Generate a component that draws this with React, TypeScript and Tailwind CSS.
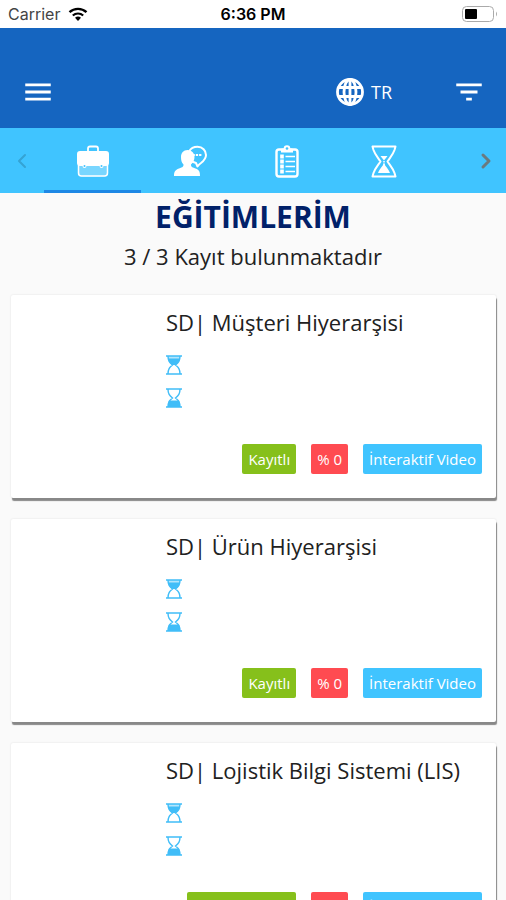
import { useState } from "react";
import { clsx } from "clsx";
import { ChevronLeft, ChevronRight } from "lucide-react";
import { MdFilterList, MdMenu } from "react-icons/md";

const BriefcaseIcon = () => (
  <svg viewBox="0 0 34 34" className="size-[34px]" fill="none" aria-hidden="true">
    <path d="M12 7V4.500q0-2 2-2h6q2 0 2 2V7" stroke="currentColor" strokeWidth="1.800" />
    <path d="M2 18h30v11q0 3.500-3.500 3.500h-23Q2 32.500 2 29Z" fill="currentColor" opacity=".3" />
    <path
      d="M4 7h26q3 0 3 3v9q0 3-3 3h-2.500a2 2 0 0 1-4 0h-13a2 2 0 0 1-4 0H4q-3 0-3-3v-9q0-3 3-3Z"
      fill="currentColor"
    />
    <path d="M2.500 21v8q0 3 3 3h23q3 0 3-3v-8" stroke="currentColor" strokeWidth="1.500" />
    <circle cx="8.500" cy="22" r="1" fill="#40c4ff" />
    <circle cx="25.500" cy="22" r="1" fill="#40c4ff" />
  </svg>
);

const AdvisorIcon = () => (
  <svg viewBox="0 0 34 34" className="size-[34px]" fill="none" aria-hidden="true">
    <path
      d="M1 32c0-4 1-6 5-7.500 4-1.300 4.500-2 4.500-4C8.500 18.500 8 16 8 13 8 9 10.500 6 14.500 6s7 3 7 7c0 3-1.500 5.500-3.500 7.500 0 2 .5 2.700 4.500 4C26.500 26 27 28 27 32Z"
      fill="currentColor"
    />
    <path
      d="M16 7.500C18 4 21 2.800 24.500 2.800c5 0 8.500 3.700 8.500 8.200 0 4-2.500 6-5 8-1.500 1-2.500 2-3.500 3.500l-1.500-3.500-4-1.500"
      stroke="currentColor"
      strokeWidth="2"
      strokeLinejoin="round"
    />
    <path d="M19.500 11h2.300M22.800 11h2.300M26.100 11h2.300" stroke="currentColor" strokeWidth="2" />
  </svg>
);

const ChecklistIcon = () => (
  <svg viewBox="0 0 34 34" className="size-[34px]" fill="none" aria-hidden="true">
    <rect x="6.500" y="5.500" width="21" height="27" rx="2.500" stroke="currentColor" strokeWidth="2.400" />
    <path d="M11 8.500V5.500q0-1 1.500-1h1.200a3.300 3.300 0 0 1 6.600 0h1.200q1.500 0 1.500 1v3Z" fill="currentColor" />
    <circle cx="17" cy="4.500" r="1.300" fill="#40c4ff" />
    <path d="M12 10.500v20" stroke="currentColor" strokeWidth="3.600" strokeDasharray="4 1" />
    <path d="M15.500 12.500H25M15.500 17.500H25M15.500 22.500H25M15.500 27.500H25" stroke="currentColor" strokeWidth="1.400" />
  </svg>
);

const TimerIcon = () => (
  <svg viewBox="0 0 34 34" className="size-[34px]" fill="none" aria-hidden="true">
    <path
      d="M5.500 2.500h23l-1 3.500c-1.500 4.500-4 7-7 11.500 3 4.500 5.500 7 7 11.500l1 3.500h-23l1-3.500c1.500-4.500 4-7 7-11.500-3-4.500-5.500-7-7-11.500Z"
      stroke="currentColor"
      strokeWidth="2"
      strokeLinejoin="round"
    />
    <path d="M13.500 12h7L17 16.500Z" fill="currentColor" />
    <path d="M17 17v5" stroke="currentColor" strokeWidth="1.500" strokeDasharray="1.500 1" />
    <path d="M17 19c1 3 4 5 6 10H11c2-5 5-7 6-10Z" fill="currentColor" />
  </svg>
);

const GlobeIcon = () => (
  <svg viewBox="0 0 28 28" className="size-7" fill="none" stroke="currentColor" strokeWidth="2.800" aria-hidden="true">
    <circle cx="14" cy="14" r="12.500" />
    <ellipse cx="14" cy="14" rx="6" ry="12.500" />
    <path d="M14 1.500v25M3 9.500h22M3 18.500h22" />
  </svg>
);

const HourglassIcon = ({ half }: { half: "top" | "bottom" }) => (
  <svg viewBox="0 0 16 20" className="size-5 w-4 text-[#40bdf8]" fill="none" aria-hidden="true">
    <path d="M0 1h16M0 19h16" stroke="currentColor" strokeWidth="1.500" />
    <path
      d="M2 1c0 5 1.500 6.500 4.500 9C3.500 12.500 2 14 2 19M14 1c0 5-1.500 6.500-4.500 9 3 2.500 4.500 4 4.500 9"
      stroke="currentColor"
      strokeWidth="1.400"
    />
    {half === "top" ? (
      <>
        <path d="M2 1h12v3H2Z" fill="currentColor" opacity=".4" />
        <path d="M2 3.500h12c-.5 3.500-2.500 5-4.500 6.500h-3C4.500 8.500 2.500 7 2 3.500Z" fill="currentColor" />
      </>
    ) : (
      <path d="M3 12.500h10c.8 2 1 3.500 1 6.500H2c0-3 .2-4.500 1-6.500Z" fill="currentColor" />
    )}
  </svg>
);

const tabs = [
  { label: "Eğitimlerim", Icon: BriefcaseIcon },
  { label: "Danışman", Icon: AdvisorIcon },
  { label: "Anketler", Icon: ChecklistIcon },
  { label: "Bekleyenler", Icon: TimerIcon },
];

const courses = [
  { title: "SD| Müşteri Hiyerarşisi", status: "Kayıtlı", progress: 0, type: "İnteraktif Video" },
  { title: "SD| Ürün Hiyerarşisi", status: "Kayıtlı", progress: 0, type: "İnteraktif Video" },
  { title: "SD| Lojistik Bilgi Sistemi (LIS)", status: "Kayıtlı", progress: 0, type: "İnteraktif Video", wide: true },
];

const StatusBar = () => (
  <div className="grid h-7 grid-cols-3 items-center bg-white px-2 font-['Inter','Roboto',sans-serif] text-base text-black">
    <div className="flex items-center gap-2 text-[#444]">
      <span>Carrier</span>
      <svg viewBox="0 0 20 14" className="h-[14px] w-5 text-black" fill="none" stroke="currentColor" aria-hidden="true">
        <path d="M1.500 5.200a12.500 12.500 0 0 1 17 0" strokeWidth="2.400" />
        <path d="M4.800 8.500a7.800 7.800 0 0 1 10.400 0" strokeWidth="2.200" />
        <path d="M7 10.800a4.500 4.500 0 0 1 6 0L10 14Z" fill="currentColor" stroke="none" />
      </svg>
    </div>
    <span className="text-center font-semibold">6:36 PM</span>
    <svg viewBox="0 0 36 16" className="h-4 w-9 justify-self-end" fill="none" aria-hidden="true">
      <rect x="0.500" y="0.500" width="31" height="15" rx="4" stroke="#aaa" />
      <rect x="3" y="3" width="12" height="10" rx="1" fill="#000" />
      <path d="M34 5.500q2 2.500 0 5Z" fill="#aaa" />
    </svg>
  </div>
);

const CourseCard = ({ title, status, progress, type, wide }: (typeof courses)[number]) => (
  <li className="rounded-xs bg-white pt-[9px] pr-[14px] pb-6 pl-[155px] shadow-[1px_3px_1px_#888,0_0_2px_#ddd]">
    <h2 className="text-[22px] leading-9 whitespace-nowrap">{title}</h2>
    <div className="mt-[15px] flex flex-col gap-[13px]">
      <HourglassIcon half="top" />
      <HourglassIcon half="bottom" />
    </div>
    <div className="-ml-20 mt-9 flex justify-end gap-[15px] text-[15px] leading-[30px] text-white">
      <span className={clsx("rounded-xs bg-[#86c01b] text-center", wide ? "w-[109px]" : "px-[6px]")}>{status}</span>
      <span className="rounded-xs bg-[#ff4b51] px-[6px]">% {progress}</span>
      <span className="rounded-xs bg-[#40c4ff] px-[6px]">{type}</span>
    </div>
  </li>
);

export default function App() {
  const [active, setActive] = useState(0);

  return (
    <div className="min-h-screen bg-[#fafafa] font-['Open_Sans','Noto_Sans',sans-serif] text-[#212121]">
      <StatusBar />
      <header className="flex h-[100px] items-end bg-[#1565c0] pr-5 pb-[19px] pl-[21px] text-white">
        <button aria-label="Menü">
          <MdMenu className="size-[34px]" />
        </button>
        <button className="mr-[60px] ml-auto flex h-[34px] items-center gap-[7px] text-lg">
          <GlobeIcon />
          TR
        </button>
        <button aria-label="Filtrele">
          <MdFilterList className="size-[34px]" />
        </button>
      </header>

      <nav className="flex h-[65px] bg-[#40c4ff]">
        <button aria-label="Önceki" className="flex w-11 items-center justify-center text-[#35a3d4]">
          <ChevronLeft size={24} />
        </button>
        <div className="flex flex-1">
          {tabs.map(({ label, Icon }, i) => (
            <button
              key={label}
              aria-label={label}
              onClick={() => setActive(i)}
              className={clsx(
                "flex w-[97px] items-center justify-center border-y-3 border-t-transparent text-white",
                i === active ? "border-b-[#1e88e5]" : "border-b-transparent",
              )}
            >
              <Icon />
            </button>
          ))}
        </div>
        <button aria-label="Sonraki" className="flex w-10 items-center justify-center text-[#6a7a80]">
          <ChevronRight size={24} strokeWidth={3} />
        </button>
      </nav>

      <main className="px-[10px] pb-5">
        <h1 className="text-center text-[30px] leading-[48px] font-bold text-[#012169]">EĞİTİMLERİM</h1>
        <p className="text-center text-[22px] leading-[30px]">3 / 3 Kayıt bulunmaktadır</p>
        <ul className="mt-6 ml-px flex flex-col gap-[21px]">
          {courses.map((course) => (
            <CourseCard key={course.title} {...course} />
          ))}
        </ul>
      </main>
    </div>
  );
}
